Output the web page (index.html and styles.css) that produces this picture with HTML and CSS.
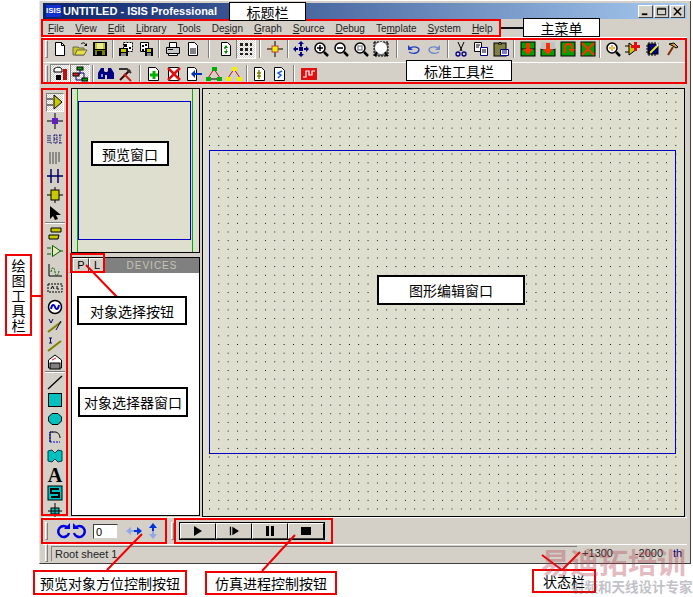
FILE: index.html
```html
<!DOCTYPE html>
<html lang="en">
<head>
  <meta charset="UTF-8">
  <title>ISIS Professional</title>
  <link rel="stylesheet" href="styles.css">
</head>
<body>
  <div class="window">
    <!-- Title bar -->
    <div class="titlebar">
      <span class="app-logo">ISIS</span>
      <span class="title-text">UNTITLED - ISIS Professional</span>
      <div class="win-buttons">
        <span class="win-btn"><svg viewBox="0 0 14 12"><rect x="3" y="8" width="6" height="2"/></svg></span>
        <span class="win-btn"><svg viewBox="0 0 14 12"><path d="M2.5 2.5h9v7h-9z M2.5 3.5h9" fill="none" stroke="#000"/></svg></span>
        <span class="win-btn"><svg viewBox="0 0 14 12"><path d="M3 2l8 8M11 2l-8 8" stroke="#000" stroke-width="1.6"/></svg></span>
      </div>
    </div>

    <!-- Main menu -->
    <div class="menubar">
      <span><u>F</u>ile</span>
      <span><u>V</u>iew</span>
      <span><u>E</u>dit</span>
      <span><u>L</u>ibrary</span>
      <span><u>T</u>ools</span>
      <span>De<u>s</u>ign</span>
      <span><u>G</u>raph</span>
      <span><u>S</u>ource</span>
      <span><u>D</u>ebug</span>
      <span>Te<u>m</u>plate</span>
      <span><u>S</u>ystem</span>
      <span><u>H</u>elp</span>
    </div>

    <!-- Standard toolbars -->
    <div class="toolbars">
      <div class="tool-row">
        <i class="grip"></i>
        <b class="ico"><svg viewBox="0 0 16 16"><path d="M3.5 1.5h6l3 3v10h-9z" fill="#fff" stroke="#000"/><path d="M9.5 1.5v3h3" fill="none" stroke="#000"/></svg></b>
        <b class="ico"><svg viewBox="0 0 16 16"><path d="M1 6h5l1 1h5v7H1z" fill="#c8c820" stroke="#665" /><path d="M3 14l2-5h10l-3 5z" fill="#e8e040" stroke="#665"/><path d="M9 3c2-2 4-1 5 1" fill="none" stroke="#000"/><path d="M15 2v3h-3" fill="#000"/></svg></b>
        <b class="ico"><svg viewBox="0 0 16 16"><rect x="1" y="1" width="14" height="14" fill="#000"/><rect x="3" y="2" width="2" height="6" fill="#c8c800"/><rect x="5" y="2" width="6" height="6" fill="#e8e8a0"/><rect x="11" y="2" width="2" height="6" fill="#c8c800"/><rect x="3" y="9" width="10" height="5" fill="#808000"/><rect x="5" y="10" width="5" height="4" fill="#000"/></svg></b>
        <i class="sep s6"></i>
        <b class="ico"><svg viewBox="0 0 16 16"><path d="M5.500 1.500h9v9h-9z" fill="#fff" stroke="#000" stroke-dasharray="2 1"/><rect x="1" y="7" width="9" height="8" fill="#000"/><rect x="3" y="8" width="5" height="3" fill="#c8c800"/><rect x="3" y="12" width="5" height="3" fill="#888"/><rect x="6" y="3" width="3" height="3"/><rect x="11" y="6" width="2" height="2"/></svg></b>
        <b class="ico"><svg viewBox="0 0 16 16"><path d="M2.500 1.500h8v9h-8z" fill="#fff" stroke="#000"/><rect x="7" y="7" width="8" height="8" fill="#000"/><rect x="9" y="8" width="4" height="3" fill="#c8c800"/><rect x="9" y="12" width="4" height="3" fill="#888"/><rect x="4" y="4" width="2" height="2"/><rect x="7" y="3" width="2" height="2"/><rect x="4" y="8" width="2" height="2"/></svg></b>
        <i class="sep s7"></i>
        <b class="ico"><svg viewBox="0 0 16 16"><path d="M4.500 1.500h7v5h-7z" fill="#fff" stroke="#000"/><path d="M1.500 6.500h13v6h-13z" fill="#c8c8c8" stroke="#000"/><path d="M3.500 12.500h9v2h-9z" fill="#fff" stroke="#000"/><rect x="3" y="8" width="5" height="1"/></svg></b>
        <b class="ico"><svg viewBox="0 0 16 16"><path d="M3.500 1.500h6l3 3v10h-9z" fill="#fff" stroke="#000"/><rect x="5" y="7" width="6" height="6" fill="#808080"/></svg></b>
        <i class="sep s13"></i>
        <b class="ico"><svg viewBox="0 0 16 16"><path d="M3.500 1.500h6l3 3v10h-9z" fill="#fff" stroke="#000"/><path d="M8 4l-2 3h4zM8 13l2-3H6z" fill="#008000"/><path d="M6 7c3 1 3 2 2 3" stroke="#008000" fill="none"/></svg></b>
        <b class="ico on"><svg viewBox="0 0 16 16"><path d="M2 2h3v3H2zM7 2h3v3H7zM12 2h2v3h-2zM2 7h3v3H2zM7 7h3v3H7zM12 7h2v3h-2zM2 12h3v2H2zM7 12h3v2H7zM12 12h2v2h-2z" fill="#222"/></svg></b>
        <i class="sep s9"></i>
        <b class="ico"><svg viewBox="0 0 16 16"><path d="M8 0v16M0 8h16" stroke="#000"/><rect x="5" y="5" width="6" height="6" fill="#f0f000" stroke="#c04040"/></svg></b>
        <i class="sep s6"></i>
        <b class="ico"><svg viewBox="0 0 16 16"><path d="M7 5V3H5l3-3 3 3H9v2h0l-1 1zM5 7H3V5L0 8l3 3V9h2zM11 7h2V5l3 3-3 3V9h-2zM7 11v2H5l3 3 3-3H9v-2z" fill="#000080"/><rect x="6" y="6" width="4" height="4" fill="#000080"/></svg></b>
        <b class="ico"><svg viewBox="0 0 16 16"><circle cx="7" cy="7" r="5" fill="#fff" stroke="#000" stroke-width="1.500"/><path d="M11 11l4 4" stroke="#000" stroke-width="2.500"/><path d="M4 7h6M7 4v6" stroke="#000" stroke-width="1.500"/></svg></b>
        <b class="ico"><svg viewBox="0 0 16 16"><circle cx="7" cy="7" r="5" fill="#fff" stroke="#000" stroke-width="1.500"/><path d="M11 11l4 4" stroke="#000" stroke-width="2.500"/><path d="M4 7h6" stroke="#000" stroke-width="1.500"/></svg></b>
        <b class="ico"><svg viewBox="0 0 16 16"><circle cx="7" cy="7" r="5" fill="#fff" stroke="#000" stroke-width="1.500"/><path d="M11 11l4 4" stroke="#000" stroke-width="2.500"/><rect x="5" y="5" width="4" height="4" fill="none" stroke="#666"/></svg></b>
        <b class="ico"><svg viewBox="0 0 16 16"><rect x="1" y="1" width="14" height="14" fill="#777" stroke="#000" stroke-dasharray="2 1"/><circle cx="8" cy="7" r="6" fill="#fff"/><path d="M4 11l-2 4M12 11l2 4" stroke="#000" stroke-width="2"/></svg></b>
        <i class="sep s13"></i>
        <b class="ico"><svg viewBox="0 0 16 16"><path d="M3 11c3 2 9 2 10-2 0-3-5-4-9-2" fill="none" stroke="#2040c0" stroke-width="1.300"/><path d="M2 4v5h5z" fill="#2040c0"/></svg></b>
        <b class="ico"><svg viewBox="0 0 16 16"><path d="M13 11c-3 2-9 2-10-2 0-3 5-4 9-2" fill="none" stroke="#7088c8" stroke-width="1.300"/><path d="M14 4v5H9z" fill="#7088c8"/></svg></b>
        <i class="sep s7"></i>
        <b class="ico"><svg viewBox="0 0 16 16"><path d="M5 1l4 9M11 1L7 10" stroke="#000"/><circle cx="5" cy="13" r="2" fill="none" stroke="#000080" stroke-width="1.300"/><circle cx="11" cy="13" r="2" fill="none" stroke="#000080" stroke-width="1.300"/></svg></b>
        <b class="ico"><svg viewBox="0 0 16 16"><path d="M1.500 1.500h7v9h-7z" fill="#fff" stroke="#000"/><path d="M7.500 6.500h7v8h-7z" fill="#fff" stroke="#000080"/><path d="M3 4h4M3 6h3M9 9h4M9 11h4" stroke="#000"/></svg></b>
        <b class="ico"><svg viewBox="0 0 16 16"><rect x="1" y="2" width="12" height="13" fill="#808040" stroke="#000"/><path d="M5 3l2-2 2 2z" fill="#f0f000" stroke="#000"/><path d="M7.500 8.500h8v6h-8z" fill="#fff" stroke="#000080"/><path d="M9 10h5M9 12h5" stroke="#000080"/></svg></b>
        <i class="sep s7"></i>
        <b class="ico"><svg viewBox="0 0 16 16"><rect x="1" y="1" width="14" height="14" fill="#00a000" stroke="#000"/><path d="M1 8h14" stroke="#000"/><path d="M6 2h4v6h3l-5 6-5-6h3z" fill="#ff3000"/></svg></b>
        <b class="ico"><svg viewBox="0 0 16 16"><rect x="1" y="8" width="14" height="7" fill="#00a000" stroke="#000"/><rect x="1" y="1" width="14" height="7" fill="#c0c0c0"/><path d="M6 2h4v6h3l-5 6-5-6h3z" fill="#ff3000"/></svg></b>
        <b class="ico"><svg viewBox="0 0 16 16"><rect x="1" y="1" width="14" height="14" fill="#00a000" stroke="#000"/><path d="M5 12V6c0-4 7-4 7 0v3" fill="none" stroke="#ff3000" stroke-width="2"/><path d="M9 8h6l-3 4z" fill="#ff3000"/></svg></b>
        <b class="ico"><svg viewBox="0 0 16 16"><rect x="1" y="1" width="14" height="14" fill="#00a000" stroke="#000"/><path d="M2 2l12 12M14 2L2 14" stroke="#ff3000" stroke-width="2"/></svg></b>
        <i class="sep s5"></i>
        <b class="ico"><svg viewBox="0 0 16 16"><circle cx="7" cy="7" r="5" fill="#fff" stroke="#000" stroke-width="1.500"/><path d="M11 11l4 4" stroke="#000" stroke-width="2.500"/><path d="M4 7h6M7 4v6" stroke="#e03030"/><circle cx="7" cy="7" r="1.500" fill="#e0e000"/></svg></b>
        <b class="ico"><svg viewBox="0 0 16 16"><path d="M4 2v12l8-6z" fill="#c8c800" stroke="#000"/><path d="M0 5h4M0 11h4" stroke="#000"/><path d="M9 1h3v3h3v3h-3v3H9V7H6V4h3z" fill="#e01010"/></svg></b>
        <b class="ico"><svg viewBox="0 0 16 16"><rect x="3" y="3" width="10" height="10" fill="#000080" stroke="#000"/><path d="M5 12l7-7" stroke="#f0f000" stroke-width="2"/><path d="M4 1v14M7 1v2M10 1v2M1 5h2M1 8h2M1 11h2M7 13v2M10 13v2" stroke="#000"/><path d="M11 1l3 3-2 2z" fill="#fff"/></svg></b>
        <b class="ico"><svg viewBox="0 0 16 16"><path d="M8 6l-5 8" stroke="#803000" stroke-width="2"/><path d="M4 3l5-1 4 4-2 1-3-2z" fill="#e0a020" stroke="#000"/></svg></b>
      </div>
      <div class="tool-row second">
        <i class="grip"></i>
        <b class="ico on"><svg viewBox="0 0 16 16"><path d="M2 3c3-3 8-2 8 1v2H2z" fill="#fff" stroke="#000"/><rect x="4" y="9" width="5" height="5" fill="#000"/><rect x="11" y="3" width="4" height="11" fill="#c01010"/></svg></b>
        <b class="ico on"><svg viewBox="0 0 16 16"><rect x="5" y="1" width="6" height="3" fill="#00a000" stroke="#000"/><rect x="1" y="7" width="6" height="3" fill="#e02020" stroke="#000"/><rect x="10" y="12" width="6" height="3" fill="#00a000" stroke="#000"/><path d="M8 4v4H7M4 10v4h6M12 12V7H8" fill="none" stroke="#000080"/></svg></b>
        <i class="sep s6"></i>
        <b class="ico"><svg viewBox="0 0 16 16"><path d="M3 2h3v3l1 1v7H0V7zM13 2h-3v3L9 6v7h7V7z" fill="#000080"/><rect x="6" y="6" width="4" height="3" fill="#000080"/><rect x="3" y="8" width="2" height="3" fill="#8090e0"/></svg></b>
        <b class="ico"><svg viewBox="0 0 16 16"><path d="M2 14L12 4" stroke="#400000" stroke-width="2"/><path d="M1 3h8l4 4" fill="none" stroke="#333" stroke-width="2"/><path d="M6 8l7 7" stroke="#c02020" stroke-width="2"/></svg></b>
        <i class="sep s8"></i>
        <b class="ico"><svg viewBox="0 0 16 16"><path d="M2.500 1.500h7l3 3v10h-10z" fill="#fff" stroke="#000"/><path d="M8 5v8M4 9h8" stroke="#00b000" stroke-width="3"/></svg></b>
        <b class="ico"><svg viewBox="0 0 16 16"><path d="M2.500 1.500h10v13h-10z" fill="#fff" stroke="#000"/><path d="M2 2l12 12M14 2L2 14" stroke="#e01010" stroke-width="2.500"/></svg></b>
        <b class="ico"><svg viewBox="0 0 16 16"><path d="M1.500 1.500h7l2 2v11h-9z" fill="#fff" stroke="#000"/><path d="M5 8l4-4v3h7v2H9v3z" fill="#0030c0"/></svg></b>
        <b class="ico"><svg viewBox="0 0 16 16"><path d="M8 3L2 12M8 3l6 9" stroke="#c01010"/><rect x="6" y="1" width="5" height="4" fill="#00b000"/><rect x="0" y="11" width="5" height="4" fill="#00b000"/><rect x="11" y="11" width="5" height="4" fill="#00b000"/><path d="M5 13h6" stroke="#000"/></svg></b>
        <b class="ico"><svg viewBox="0 0 16 16"><path d="M8 3L2 12M8 3l6 9" stroke="#c01010"/><rect x="6" y="1" width="5" height="4" fill="#f0f000"/><rect x="0" y="11" width="5" height="4" fill="#f0f000"/><rect x="11" y="11" width="5" height="4" fill="#f0f000"/></svg></b>
        <i class="sep s6"></i>
        <b class="ico"><svg viewBox="0 0 16 16"><path d="M2.500 1.500h7l3 3v10h-10z" fill="#fff" stroke="#000"/><path d="M7 4v9M5 7h4M5 10h4" stroke="#808000" stroke-width="1.500"/></svg></b>
        <b class="ico"><svg viewBox="0 0 16 16"><path d="M2.500 1.500h7l3 3v10h-10z" fill="#fff" stroke="#000"/><path d="M10 5L6 7l3 2-3 3" fill="none" stroke="#1060e0" stroke-width="1.500"/></svg></b>
        <i class="sep s9"></i>
        <b class="ico"><svg viewBox="0 0 16 16"><rect y="2" width="16" height="12" fill="#e01010"/><path d="M2 11h3V5h3v4h3V5h3" fill="none" stroke="#fff" stroke-width="1.200"/></svg></b>
      </div>
    </div>

    <!-- Work area -->
    <div class="workarea">
      <div class="draw-tools">
        <b class="tool on"><svg viewBox="0 0 16 16"><path d="M0 5h6M0 11h6" stroke="#000"/><path d="M7 1v14l8-7z" fill="#c8c800" stroke="#000"/></svg></b>
        <b class="tool"><svg viewBox="0 0 16 16"><path d="M8 0v16M0 8h16" stroke="#000"/><rect x="5" y="5" width="6" height="6" fill="#6020c0"/></svg></b>
        <b class="tool"><svg viewBox="0 0 16 16"><path d="M1 4v8M3 4v8h2M7 4h3v8H7zM7 8h3M12 4h3M12 12h3M13 4v8" fill="none" stroke="#000060" stroke-dasharray="1.500 .8"/></svg></b>
        <b class="tool"><svg viewBox="0 0 16 16"><path d="M2 3h12M2 5h12M2 7h12M2 9h12M2 11h12M2 13h8" stroke="#444" stroke-dasharray="2 1"/></svg></b>
        <b class="tool"><svg viewBox="0 0 16 16"><path d="M0 8h16M4 1v14M11 1v14" stroke="#000060" stroke-width="1.500"/></svg></b>
        <b class="tool"><svg viewBox="0 0 16 16"><path d="M8 0v3M8 13v3" stroke="#000"/><rect x="4" y="3" width="8" height="10" fill="#c8c800" stroke="#000"/><path d="M0 8h4M12 8h4" stroke="#000"/></svg></b>
        <b class="tool"><svg viewBox="0 0 16 16"><path d="M3 1v13l3-3 2 4 3-1-2-4h5z" fill="#000"/></svg></b>
        <i class="hsep"></i>
        <b class="tool"><svg viewBox="0 0 16 16"><path d="M4 3h10v4H4zM2 10h10l-1 4H2z" fill="#c8c800" stroke="#000"/></svg></b>
        <b class="tool"><svg viewBox="0 0 16 16"><path d="M0 5h4M0 11h4" stroke="#006000"/><path d="M5.500 2.500v11l8-5.500z" fill="#e8e8c0" stroke="#006000"/><path d="M13 8h3" stroke="#006000"/></svg></b>
        <b class="tool"><svg viewBox="0 0 16 16"><path d="M2 2v12h13" fill="none" stroke="#000"/><path d="M4 10c1-6 3-6 4 0s3 4 4-1" fill="none" stroke="#006000" stroke-dasharray="2 1"/></svg></b>
        <b class="tool"><svg viewBox="0 0 16 16"><rect x="1" y="4" width="14" height="8" fill="none" stroke="#000" stroke-dasharray="2 1"/><path d="M4 9l1.500-3L7 9M10 6v3h2" fill="none" stroke="#000"/></svg></b>
        <b class="tool"><svg viewBox="0 0 16 16"><circle cx="8" cy="8" r="6.500" fill="#fff" stroke="#000" stroke-width="1.500"/><path d="M4 10c1-5 3-5 4-2s3 3 4-2" fill="none" stroke="#0000c0" stroke-width="2"/></svg></b>
        <b class="tool"><svg viewBox="0 0 16 16"><path d="M1 15L14 5" stroke="#808000" stroke-width="2"/><path d="M2 2l2 4 2-4M9 13l5-9" fill="none" stroke="#000060"/></svg></b>
        <b class="tool"><svg viewBox="0 0 16 16"><path d="M1 15L14 5" stroke="#808000" stroke-width="2"/><path d="M2 2h3M3.500 2v5M2 7h3" fill="none" stroke="#000060"/></svg></b>
        <b class="tool"><svg viewBox="0 0 16 16"><path d="M1.500 6L8 1l6.500 5v8h-13z" fill="#fff" stroke="#000"/><rect x="3" y="9" width="10" height="6" fill="#808080" stroke="#000"/><path d="M5 6l4-2" stroke="#e02020"/></svg></b>
        <i class="hsep"></i>
        <b class="tool"><svg viewBox="0 0 16 16"><path d="M1 15L15 2" stroke="#000" stroke-width="1.300"/></svg></b>
        <b class="tool"><svg viewBox="0 0 16 16"><rect x="1.500" y="1.500" width="13" height="13" fill="#00c0c0" stroke="#000"/></svg></b>
        <b class="tool"><svg viewBox="0 0 16 16"><path d="M5 2.500h6l3.500 3.500v4L11 13.500H5L1.500 10V6z" fill="#00c0c0" stroke="#000"/></svg></b>
        <b class="tool"><svg viewBox="0 0 16 16"><path d="M3 13V3h5c3 0 5 3 5 6" fill="none" stroke="#000"/><path d="M3 13h10" stroke="#0000c0" stroke-dasharray="2 1"/><path d="M3 13V3h3" stroke="#0000c0" fill="none" stroke-dasharray="2 1"/></svg></b>
        <b class="tool"><svg viewBox="0 0 16 16"><path d="M1 3l4-1 3 3 3-3 4 1v10l-4 1-3-3-3 3-4-1z" fill="#00c0c0" stroke="#004040"/></svg></b>
        <b class="tool letter">A</b>
        <b class="tool"><svg viewBox="0 0 16 16"><rect x="1" y="1" width="14" height="14" fill="#00c0c0" stroke="#000"/><path d="M12 4H4v4h8v4H4" fill="none" stroke="#000" stroke-width="2"/></svg></b>
        <b class="tool"><svg viewBox="0 0 16 16"><path d="M8 0v16M1 8h14" stroke="#000"/><rect x="4" y="5" width="8" height="6" fill="#00c0c0" stroke="#000"/><path d="M8 5v6M4 8h8" stroke="#000"/></svg></b>
      </div>

      <div class="side-panels">
        <div class="preview">
          <div class="preview-sheet"></div>
        </div>
        <div class="selector">
          <div class="selector-head">
            <span class="pick-btn">P</span>
            <span class="pick-btn">L</span>
            <span class="devices">DEVICES</span>
          </div>
        </div>
      </div>

      <div class="canvas">
        <div class="sheet"></div>
      </div>
    </div>

    <!-- Orientation and simulation controls -->
    <div class="controlbar">
      <i class="grip"></i>
      <b class="ctl first"><svg viewBox="0 0 16 16"><path d="M13 5a5.500 5.500 0 1 0 1 5" fill="none" stroke="#0000e0" stroke-width="2.500"/><path d="M9 6h6V0z" fill="#0000e0"/></svg></b>
      <b class="ctl"><svg viewBox="0 0 16 16"><path d="M3 5a5.500 5.500 0 1 1-1 5" fill="none" stroke="#0000e0" stroke-width="2.500"/><path d="M7 6H1V0z" fill="#0000e0"/></svg></b>
      <span class="angle">0</span>
      <b class="ctl wide"><svg viewBox="0 0 16 16"><path d="M0 8l5-4v3h3v2H5v3z" fill="#90a8e8"/><path d="M16 8l-5-4v3H8v2h3v3z" fill="#0030e0"/></svg></b>
      <b class="ctl"><svg viewBox="0 0 16 16"><path d="M8 0L4 5h3v3h2V5h3z" fill="#0030e0"/><path d="M8 16l-4-5h3V8h2v3h3z" fill="#90a8e8"/></svg></b>
      <i class="sep s7"></i>
      <i class="grip"></i>
      <div class="sim-buttons">
        <b class="sim"><svg viewBox="0 0 10 10"><path d="M1 0l8 5-8 5z"/></svg></b>
        <b class="sim"><svg viewBox="0 0 12 10"><path d="M1 0h1.500v10H1zM4 0l8 5-8 5z"/></svg></b>
        <b class="sim"><svg viewBox="0 0 10 10"><path d="M1 0h3v10H1zM6 0h3v10H6z"/></svg></b>
        <b class="sim"><svg viewBox="0 0 10 10"><path d="M0 1h10v8H0z"/></svg></b>
      </div>
    </div>

    <!-- Status bar -->
    <div class="statusbar">
      <i class="grip"></i>
      <div class="status-main">Root sheet 1</div>
      <span class="coord-x">+1300</span>
      <span class="coord-y">-2000</span>
      <span class="coord-unit">th</span>
    </div>
  </div>

  <!-- Annotations drawn over the screenshot -->
  <svg class="marks" viewBox="0 0 693 597">
    <path d="M32 296h10M86 265l31 32M142 534l-35 36M295 535l-33 36M542 555l20 15M580 552l-18 18"/>
    <path class="dark" d="M501 28h22"/>
  </svg>
  <div class="mark m-menu"></div>
  <div class="mark m-tools"></div>
  <div class="mark m-draw"></div>
  <div class="mark m-pick"></div>
  <div class="mark m-orient"></div>
  <div class="mark m-sim"></div>

  <div class="note n-title">标题栏</div>
  <div class="note n-menu">主菜单</div>
  <div class="note n-tools">标准工具栏</div>
  <div class="note thick n-preview">预览窗口</div>
  <div class="note thick n-pick">对象选择按钮</div>
  <div class="note thick n-select">对象选择器窗口</div>
  <div class="note thick n-canvas">图形编辑窗口</div>
  <div class="note red n-draw">绘图工具栏</div>
  <div class="note red n-orient">预览对象方位控制按钮</div>
  <div class="note red n-sim">仿真进程控制按钮</div>
  <div class="note red n-status">状态栏</div>

  <!-- Site watermark -->
  <div class="wm wm-top">易迪拓培训</div>
  <div class="wm wm-bottom">射频和天线设计专家</div>
</body>
</html>
```

FILE: styles.css
```css
* {
  box-sizing: border-box;
}

body {
  margin: 0;
  background-color: #fff;
  font-family: "Liberation Sans", Arial, sans-serif;
  font-size: 11px;
  color: #000;
  overflow: hidden;
}

/* ---- window ---- */
.window {
  width: 652px;
  height: 563px;
  margin-top: 1px;
  margin-left: 39px;
  padding: 2px 3px 0 3px;
  background-color: #d4d0c8;
  border-right: 1px solid #404040;
  border-bottom: 1px solid #404040;
  border-left: 1px solid #e8e8e8;
  display: flex;
  flex-direction: column;
}

.titlebar {
  flex: none;
  height: 16px;
  display: flex;
  align-items: center;
  padding-left: 3px;
  background: linear-gradient(to right, #0a246a, #a6caf0);
}

.app-logo {
  width: 15px;
  height: 12px;
  background-color: #1030d0;
  color: #fff;
  font-size: 8px;
  line-height: 12px;
  text-align: center;
  font-weight: bold;
}

.title-text {
  margin-left: 2px;
  color: #fff;
  font-weight: bold;
  font-size: 11px;
}

.win-buttons {
  display: flex;
  margin-left: auto;
  margin-right: 2px;
  gap: 1px;
}

.win-btn {
  width: 15px;
  height: 13px;
  background-color: #d4d0c8;
  border: 1px solid;
  border-color: #fff #404040 #404040 #fff;
}

.win-btn svg {
  display: block;
  width: 13px;
  height: 11px;
}

.menubar {
  flex: none;
  height: 18px;
  display: flex;
  align-items: center;
  padding-left: 5px;
  gap: 11px;
  color: #222;
  font-size: 10px;
}

/* ---- toolbars ---- */
.toolbars {
  flex: none;
  height: 47px;
  border-top: 1px solid #fff;
}

.tool-row {
  height: 22px;
  display: flex;
  align-items: center;
}

.second {
  margin-top: 2px;
  border-top: 1px solid #fff;
}

.grip {
  flex: none;
  width: 3px;
  height: 18px;
  margin-left: 2px;
  margin-right: 2px;
  border: 1px solid;
  border-color: #fff #808080 #808080 #fff;
}

.ico {
  flex: none;
  width: 20px;
  height: 20px;
  padding: 2px;
}

.ico svg,
.tool svg,
.ctl svg {
  display: block;
  width: 16px;
  height: 16px;
}

.on {
  background-color: #f0eeea;
  background-image: repeating-conic-gradient(#d4d0c8 0 25%, #fff 0 50%);
  background-size: 2px 2px;
  border: 1px solid;
  border-color: #808080 #fff #fff #808080;
  padding: 1px;
}

.sep {
  flex: none;
  background: linear-gradient(to right, transparent calc(50% - 1px), #808080 calc(50% - 1px), #808080 50%, #fff 50%, #fff calc(50% + 1px), transparent calc(50% + 1px));
  height: 18px;
}

.s5 { width: 5px; }
.s6 { width: 6px; }
.s7 { width: 7px; }
.s8 { width: 8px; }
.s9 { width: 9px; }
.s13 { width: 13px; }

/* ---- work area ---- */
.workarea {
  flex: none;
  height: 433px;
  display: flex;
}

.draw-tools {
  flex: none;
  width: 24px;
  padding-top: 9px;
  display: flex;
  flex-direction: column;
  align-items: center;
}

.tool {
  flex: none;
  width: 18px;
  height: 18.5px;
  padding: 1px;
}

.tool.on {
  padding: 0;
}

.letter {
  font-family: "Liberation Serif", serif;
  font-size: 20px;
  line-height: 18px;
  text-align: center;
  font-weight: bold;
}

.hsep {
  flex: none;
  width: 20px;
  height: 0;
  border-top: 1px solid #fff;
  box-shadow: 0 -1px #808080;
}

.side-panels {
  flex: none;
  width: 129px;
  margin-left: 4px;
  padding-top: 4px;
  display: flex;
  flex-direction: column;
  gap: 4px;
}

.preview {
  flex: none;
  height: 165px;
  padding: 12px 8px 12px 6px;
  background-color: #dfdfd0;
  border: 1px solid #000;
  background-image: linear-gradient(#00b000, #00b000), linear-gradient(#00b000, #00b000);
  background-size: 1px 100%;
  background-position: 5px 0, 120px 0;
  background-repeat: no-repeat;
}

.preview-sheet {
  height: 100%;
  border: 1px solid #0000c8;
}

.selector {
  flex: 1;
  margin-bottom: 1px;
  background-color: #fff;
  border: 1px solid #000;
}

.selector-head {
  height: 15px;
  display: flex;
  align-items: center;
  padding-left: 1px;
  background-color: #808080;
}

.pick-btn {
  width: 16px;
  height: 15px;
  text-align: center;
  line-height: 13px;
  background-color: #d4d0c8;
  border: 1px solid;
  border-color: #fff #404040 #404040 #fff;
}

.devices {
  flex: 1;
  text-align: center;
  color: #c4c4b4;
  font-size: 10px;
  letter-spacing: 1px;
}

.canvas {
  flex: none;
  width: 483px;
  height: 429px;
  margin-top: 4px;
  margin-left: 2px;
  padding: 61px 8px 62px 6px;
  border: 1px solid #000;
  background-color: #dfdfd0;
  background-image: radial-gradient(circle at 0.5px 0.5px, #000 0.7px, transparent 0.7px);
  background-size: 9.33px 8.67px;
  background-position: 6px 4px;
}

.sheet {
  height: 100%;
  border: 1px solid #0000c0;
}

/* ---- bottom bars ---- */
.controlbar {
  flex: none;
  height: 27px;
  display: flex;
  align-items: center;
  border-top: 1px solid #fff;
}

.ctl {
  flex: none;
  width: 16px;
  height: 16px;
  margin-right: 1px;
}

.ctl.first {
  margin-left: 5px;
}

.ctl.wide {
  margin-left: 8px;
  margin-right: 3px;
}

.angle {
  flex: none;
  width: 25px;
  height: 15px;
  margin-left: 4px;
  padding-left: 2px;
  line-height: 14px;
  background-color: #fff;
  border: 1px solid;
  border-color: #404040 #d4d0c8 #d4d0c8 #404040;
}

.sim-buttons {
  flex: none;
  display: flex;
  margin-left: 3px;
  border: 1px solid #000;
}

.sim {
  width: 36px;
  height: 16px;
  display: flex;
  align-items: center;
  justify-content: center;
  background-color: #d4d0c8;
  border: 1px solid;
  border-color: #fff #000 #404040 #fff;
}

.sim svg {
  width: 10px;
  height: 10px;
}

.statusbar {
  flex: none;
  height: 17px;
  display: flex;
  align-items: center;
  border-top: 1px solid #fff;
  color: #222;
}

.status-main {
  flex: none;
  width: 526px;
  height: 15px;
  margin-left: 1px;
  padding-left: 3px;
  line-height: 14px;
  border-top: 1px solid #808080;
  border-left: 1px solid #808080;
}

.coord-x {
  width: 36px;
  text-align: right;
}

.coord-y {
  width: 50px;
  text-align: right;
}

.coord-unit {
  margin-left: 10px;
  color: #000080;
}

/* ---- annotations ---- */
.marks {
  position: absolute;
  left: 0;
  top: 0;
  width: 693px;
  height: 597px;
  fill: none;
  stroke: #f00000;
  stroke-width: 2;
}

.marks .dark {
  stroke: #111;
}

.mark {
  position: absolute;
  border: 2px solid #f00000;
}

.m-menu { left: 41px; top: 19px; width: 460px; height: 18px; }
.m-tools { left: 41px; top: 38px; width: 646px; height: 46px; }
.m-draw { left: 41px; top: 88px; width: 27px; height: 428px; }
.m-pick { left: 70px; top: 253px; width: 35px; height: 20px; }
.m-orient { left: 41px; top: 518px; width: 126px; height: 26px; }
.m-sim { left: 174px; top: 518px; width: 159px; height: 26px; }

.note {
  position: absolute;
  display: flex;
  align-items: center;
  justify-content: center;
  background-color: #fff;
  border: 1px solid #000;
  font-family: "Noto Sans CJK SC", sans-serif;
  font-size: 14px;
  color: #000;
}

.thick {
  border-width: 2px;
}

.red {
  border: 2px solid #f00000;
}

.n-title { left: 229px; top: 2px; width: 77px; height: 19px; }
.n-menu { left: 523px; top: 18px; width: 77px; height: 19px; }
.n-tools { left: 406px; top: 60px; width: 106px; height: 21px; }
.n-preview { left: 91px; top: 141px; width: 78px; height: 25px; }
.n-pick { left: 77px; top: 296px; width: 110px; height: 29px; }
.n-select { left: 78px; top: 387px; width: 110px; height: 30px; }
.n-canvas { left: 377px; top: 275px; width: 148px; height: 30px; }
.n-draw { left: 5px; top: 254px; width: 27px; height: 82px; line-height: 15px; padding: 0 5px; text-align: center; }
.n-orient { left: 33px; top: 570px; width: 154px; height: 25px; }
.n-sim { left: 205px; top: 571px; width: 132px; height: 24px; }
.n-status { left: 532px; top: 569px; width: 64px; height: 24px; background-color: transparent; }

.wm {
  position: absolute;
  font-family: "Noto Sans CJK SC", sans-serif;
  font-weight: bold;
  opacity: 0.35;
  white-space: nowrap;
}

.wm-top {
  left: 541px;
  top: 544px;
  font-size: 29px;
  line-height: 34px;
  color: #b04050;
}

.wm-bottom {
  left: 571px;
  top: 577px;
  font-size: 13.500px;
  line-height: 18px;
  color: #505060;
}
```
